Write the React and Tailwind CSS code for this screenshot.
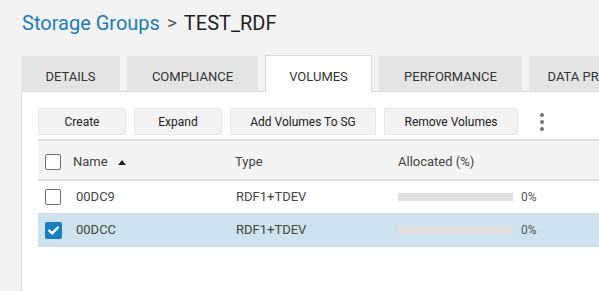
import React from "react";

function Checkbox({ checked }) {
  if (checked) {
    return (
      <div className="w-[17px] h-[17px] bg-[#1a7ec3] rounded-[2px] flex items-center justify-center">
        <svg width="11" height="9" viewBox="0 0 11 9">
          <path d="M1.2 4.6 L4.2 7.4 L9.8 1.6" stroke="#fff" strokeWidth="2.4" fill="none" strokeLinecap="round" strokeLinejoin="round" />
        </svg>
      </div>
    );
  }
  return <div className="w-[16px] h-[16px] bg-white border border-[#6f6f6f] rounded-[2px]" />;
}

function Tab({ label, active, w }) {
  return (
    <div
      className={
        "h-[36px] flex items-center justify-center pt-[6px] text-[13px] text-[#333] whitespace-nowrap overflow-hidden shrink-0 " +
        (active
          ? "bg-white border border-[#dcdcdc] border-b-0 h-[37px] relative top-[1px] -mt-[2px]"
          : "bg-[#e4e4e4]")
      }
      style={{ width: w }}
    >
      {label}
    </div>
  );
}

function Btn({ label, w }) {
  return (
    <div
      className="h-[27px] bg-[#f3f3f3] border border-[#e8e8e8] rounded-[2px] flex items-center justify-center pt-[1px] text-[12px] text-[#222] shrink-0"
      style={{ width: w }}
    >
      {label}
    </div>
  );
}

function Row({ name, selected }) {
  return (
    <div
      className={
        "grid grid-cols-[35px_162px_163px_1fr] h-[33px] items-center border-b border-[#d8d8d8] text-[13px] text-[#444] " +
        (selected ? "bg-[#cde3ef]" : "bg-white")
      }
    >
      <div className="pl-[7px] flex items-center">
        <Checkbox checked={selected} />
      </div>
      <div className="pl-[3px]">{name}</div>
      <div className="pl-[1px]">RDF1+TDEV</div>
      <div className="flex items-center">
        <div className="w-[115px] h-[8px] bg-[#e0e0e0]" />
        <span className="ml-[8px] text-[12px] text-[#555]">0%</span>
      </div>
    </div>
  );
}

export default function App() {
  return (
    <div
      className="w-[599px] h-[291px] bg-[#f3f3f3] overflow-hidden flex flex-col"
      style={{ fontFamily: "Roboto, 'Liberation Sans', sans-serif" }}
    >
      <div className="pl-[22px] pt-[9px] h-[56px] flex items-start text-[20px] leading-[28px]">
        <span className="text-[#1b7bbd]">Storage Groups</span>
        <span className="text-[#555] text-[19px] mx-[7px]">&gt;</span>
        <span className="text-[#1f1f1f]">TEST_RDF</span>
      </div>
      <div className="flex pl-[21px] gap-[7px] h-[35px] items-start">
        <Tab label="DETAILS" w={99} />
        <Tab label="COMPLIANCE" w={131} />
        <Tab label="VOLUMES" w={107} active />
        <Tab label="PERFORMANCE" w={143} />
        <Tab label="DATA PROTECTION" w={150} />
      </div>
      <div className="ml-[21px] flex-1 bg-white border-l border-t border-[#dcdcdc] pl-[16px] pt-[16px]">
        <div className="flex items-center gap-[8px]">
          <Btn label="Create" w={88} />
          <Btn label="Expand" w={88} />
          <Btn label="Add Volumes To SG" w={146} />
          <Btn label="Remove Volumes" w={134} />
          <div className="ml-[14px] flex flex-col gap-[3px]">
            <div className="w-[4px] h-[4px] rounded-full bg-[#707478]" />
            <div className="w-[4px] h-[4px] rounded-full bg-[#707478]" />
            <div className="w-[4px] h-[4px] rounded-full bg-[#707478]" />
          </div>
        </div>
        <div className="mt-[4px] w-[600px]">
          <div className="grid grid-cols-[35px_162px_163px_1fr] h-[42px] pt-[4px] items-center bg-[#f4f4f4] border-t-2 border-b-2 border-[#e0e0e0] text-[13px] text-[#444]">
            <div className="pl-[7px] flex items-center">
              <Checkbox />
            </div>
            <div className="flex items-center">
              Name
              <svg width="8" height="5" viewBox="0 0 8 5" className="ml-[10px]">
                <path d="M0 5 L4 0 L8 5 Z" fill="#222" />
              </svg>
            </div>
            <div>Type</div>
            <div>Allocated (%)</div>
          </div>
          <Row name="00DC9" />
          <Row name="00DCC" selected />
        </div>
      </div>
    </div>
  );
}
